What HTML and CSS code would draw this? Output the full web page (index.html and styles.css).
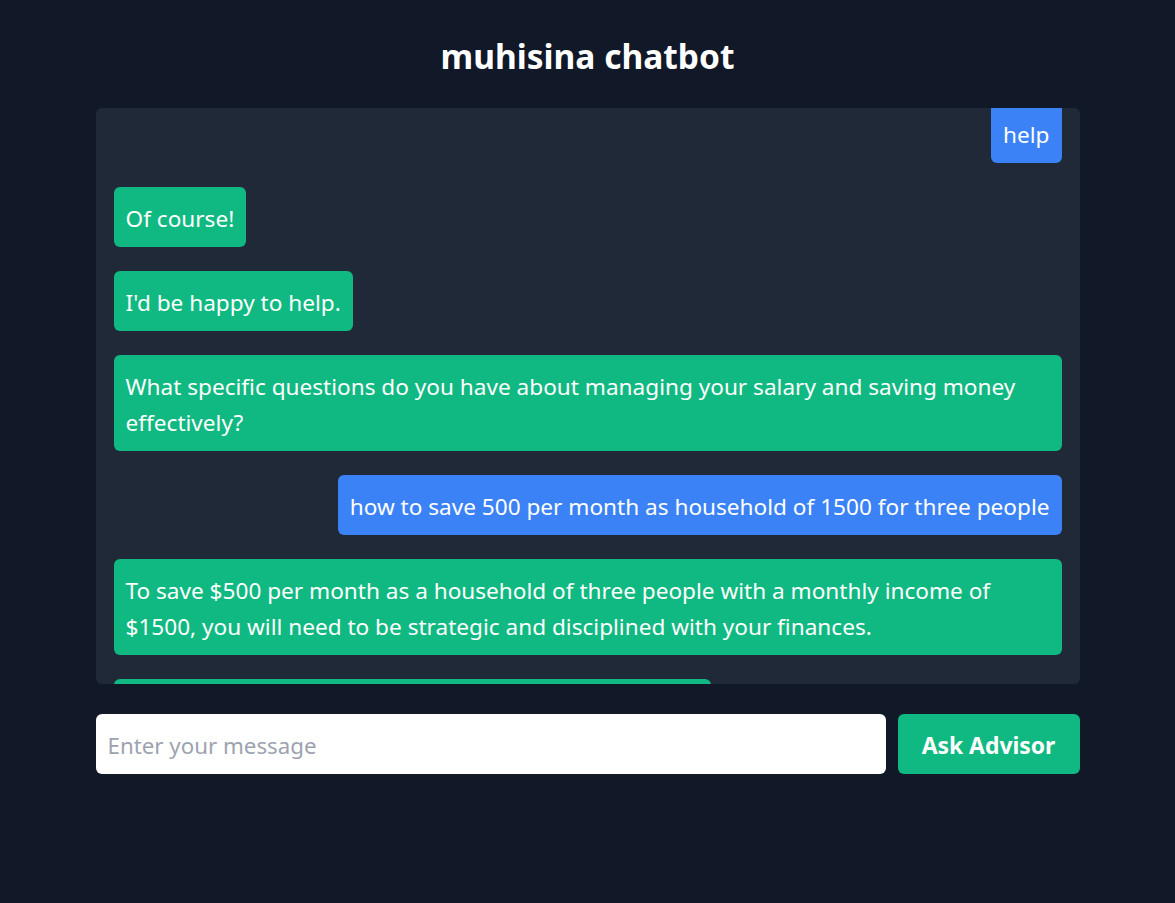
FILE: index.html
```html
<!DOCTYPE html>
<html lang="en">
<head>
<meta charset="utf-8">
<title>muhisina chatbot</title>
<link rel="stylesheet" href="styles.css">
</head>
<body>
<main class="app">
  <h1 class="title">muhisina chatbot</h1>
  <section class="chat">
    <div class="messages">
      <div class="msg user">help</div>
      <div class="msg bot">Of course!</div>
      <div class="msg bot">I'd be happy to help.</div>
      <div class="msg bot">What specific questions do you have about managing your salary and saving money effectively?</div>
      <div class="msg user">how to save 500 per month as household of 1500 for three people</div>
      <div class="msg bot">To save $500 per month as a household of three people with a monthly income of $1500, you will need to be strategic and disciplined with your finances.</div>
      <div class="msg bot">Here are some steps you can take to achieve this goal:</div>
    </div>
  </section>
  <form class="composer">
    <input class="input" type="text" placeholder="Enter your message">
    <button class="send" type="button">Ask Advisor</button>
  </form>
</main>
</body>
</html>
```
FILE: styles.css
```css
* { box-sizing: border-box; }
html, body { margin: 0; padding: 0; }
body {
  background: #111827;
  color: #fff;
  font-family: "Noto Sans", "Open Sans", sans-serif;
  height: 903px;
  overflow: hidden;
}
.app {
  width: 984px;
  margin: 0 auto;
  padding-top: 32px;
}
.title {
  margin: 0 0 28px;
  text-align: center;
  font-size: 33.5px;
  line-height: 48px;
  font-weight: 700;
}
.chat {
  background: #1f2937;
  border-radius: 6px;
  height: 576px;
  overflow: hidden;
  padding: 0 18px;
}
.messages {
  display: flex;
  flex-direction: column;
  align-items: flex-start;
  gap: 24px;
  margin-top: -5px;
}
.msg {
  padding: 14px 12px 10px;
  border-radius: 6px;
  font-size: 22.6px;
  line-height: 36px;
  max-width: 100%;
}
.bot { background: #10b981; }
.user { background: #3b82f6; align-self: flex-end; }
.composer {
  display: flex;
  gap: 12px;
  margin-top: 30px;
}
.input {
  flex: 1;
  height: 60px;
  border: none;
  border-radius: 6px;
  padding: 2px 12px 0;
  font-family: inherit;
  font-size: 22.3px;
  color: #111827;
  background: #fff;
  outline: none;
}
.input::placeholder { color: #9ca3af; }
.send {
  width: 182px;
  height: 60px;
  border: none;
  border-radius: 6px;
  padding: 2px 0 0;
  background: #10b981;
  color: #fff;
  font-family: inherit;
  font-size: 22.9px;
  font-weight: 700;
}
```
